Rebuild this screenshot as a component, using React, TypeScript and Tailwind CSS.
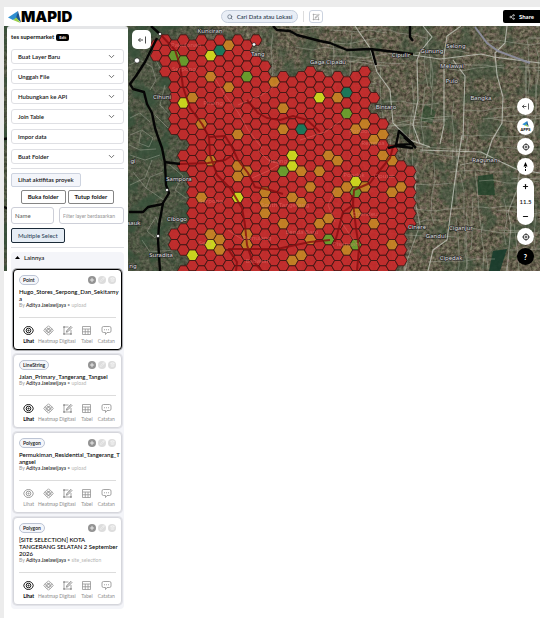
import { ReactNode } from 'react';
import { ChevronDown, Minus, Pencil, Plus, Search, Share2, Trash2 } from 'lucide-react';

interface Layer {
  type: string;
  title: string;
  source: string;
  visible: boolean;
  selected?: boolean;
}

const layers: Layer[] = [
  { type: 'Point', title: 'Hugo_Stores_Serpong_Dan_Sekitarnya', source: 'upload', visible: true, selected: true },
  { type: 'LineString', title: 'Jalan_Primary_Tangerang_Tangsel', source: 'upload', visible: true },
  { type: 'Polygon', title: 'Permukiman_Residential_Tangerang_Tangsel', source: 'upload', visible: false },
  { type: 'Polygon', title: '[SITE SELECTION] KOTA TANGERANG SELATAN 2 September 2026', source: 'site_selection', visible: true },
];

const menuItems = [
  { label: 'Buat Layer Baru', expandable: true },
  { label: 'Unggah File', expandable: true },
  { label: 'Hubungkan ke API', expandable: true },
  { label: 'Join Table', expandable: true },
  { label: 'Impor data', expandable: false },
  { label: 'Buat Folder', expandable: true },
];

// [column, first half-row, last half-row]
const hexRuns: number[][] = [
  [0, 1, 3], [1, 0, 6], [2, 1, 17], [2, 37, 39], [3, 0, 18], [3, 22, 24], [3, 36, 40], [3, 44, 44],
  [4, 1, 45], [5, 0, 44], [6, 1, 45], [7, 0, 44], [8, 1, 45], [9, 0, 44], [10, 1, 45],
  [11, 0, 0], [11, 4, 44], [12, 5, 45], [13, 8, 44], [14, 7, 45], [15, 8, 44], [16, 7, 45],
  [17, 6, 44], [18, 7, 45], [19, 8, 44], [20, 7, 45], [21, 8, 44], [22, 7, 45], [23, 6, 44],
  [24, 11, 11], [24, 15, 45], [25, 16, 44], [26, 21, 45], [27, 24, 42], [28, 25, 35],
];

const hexScores: Record<string, string[]> = {
  '#c98122': [
    '8-1', '6-7', '8-9', '13-8', '4-11', '5-16', '14-13', '14-17', '9-18', '6-23', '9-24', '9-26', '10-25',
    '16-25', '18-25', '19-22', '17-28', '5-30', '12-29', '15-30', '16-31', '12-31', '12-33', '14-35', '18-35',
    '19-34', '6-37', '7-38', '7-40', '10-37', '10-39', '17-38', '16-41', '15-42', '20-11', '22-17', '23-16',
    '25-18', '24-19', '20-23', '25-22', '26-23', '21-28', '23-28', '20-29', '27-28', '26-29', '22-33',
    '24-35', '21-40', '26-39',
  ],
  '#d2dc1c': ['6-3', '18-11', '3-12', '15-22', '15-24', '9-30', '6-39', '4-41', '22-27'],
  '#6a9f2b': ['2-3', '3-4', '10-7', '14-25', '19-38', '21-14', '22-29', '22-39'],
  '#18795a': ['7-2', '16-17', '21-10'],
};

const scoreOf: Record<string, string> = {};
Object.entries(hexScores).forEach(([color, keys]) => keys.forEach((key) => (scoreOf[key] = color)));

const hexes = hexRuns.flatMap(([col, from, to]) => {
  const cells = [];
  for (let row = from; row <= to; row += 2) {
    const x = 156.2 + col * 9.07;
    const y = 40 + row * 5.25;
    const points = [[6, 0], [3, 5.25], [-3, 5.25], [-6, 0], [-3, -5.25], [3, -5.25]]
      .map(([dx, dy]) => `${(x + dx).toFixed(1)},${(y + dy).toFixed(1)}`)
      .join(' ');
    cells.push({ key: `${col}-${row}`, points });
  }
  return cells;
});

const noise = (n: number) => {
  const v = Math.sin(n * 127.1 + 11.7) * 43758.5453;
  return v - Math.floor(v);
};

const streets: string[] = [];
for (let i = 0; i < 110; i++) {
  let x = 255 + noise(i) * 285;
  let y = 26 + noise(i + 200) * 240;
  let d = `M${x.toFixed(0)} ${y.toFixed(0)}`;
  for (let s = 0; s < 4; s++) {
    const main = 8 + noise(i * 7 + s) * 13;
    const side = (noise(i * 13 + s) - 0.5) * 6;
    x += i % 2 ? main : side;
    y += i % 2 ? side : main;
    d += `L${x.toFixed(0)} ${y.toFixed(0)}`;
  }
  streets.push(d);
}

const places: [string, number, number][] = [
  ['Kunciran', 210, 33], ['Tang', 258, 56], ['Gaga Cipadu', 328, 64], ['Cihuni', 162, 99],
  ['Sampora', 179, 181], ['Cibogo', 177, 221], ['Suradita', 161, 257], ['gi', 133, 163], ['sauk', 134, 225],
  ['ng', 133, 268], ['Bintaro', 386, 109], ['Cipulir', 401, 57], ['Gunung', 432, 53], ['Selong', 456, 48],
  ['Melawai', 452, 68], ['Pulo', 452, 83], ['Bangka', 481, 100], ['Ragunan', 485, 162], ['Cinere', 417, 229],
  ['Gandul', 436, 238], ['Ciganjur', 461, 230], ['Cipedak', 451, 260],
];

const districts: [string, number, number][] = [
  ['Pakulonan', 186, 47], ['Serpong', 184, 71], ['Pinang', 213, 105], ['Serpong', 211, 203],
  ['South Tangerang', 285, 207], ['Jurang', 278, 163], ['Benda Baru', 302, 234], ['Setu', 205, 245],
  ['Pamulang', 257, 240], ['Babakan', 258, 263], ['Pondok', 360, 133], ['Rempoa', 373, 145],
  ['Pondok', 354, 177], ['Ciputat', 384, 178], ['Cirendeu', 365, 216], ['Pisangan', 346, 246],
];

const MapView = () => (
  <svg
    className="block h-[245px] w-full bg-[#4b493e]"
    viewBox="4 26 536 245"
    preserveAspectRatio="xMinYMin slice"
    role="img"
    aria-label="Peta"
  >
    <defs>
      <filter id="terrain" x="0" y="0" width="100%" height="100%" colorInterpolationFilters="sRGB">
        <feTurbulence type="fractalNoise" baseFrequency="0.3" numOctaves="3" seed="5" />
        <feColorMatrix values="0.5 0.1 0 0 0.09  0.4 0.2 0 0 0.07  0.42 0.1 0 0 0.04  0 0 0 0 1" />
      </filter>
      <filter id="woods" x="0" y="0" width="100%" height="100%" colorInterpolationFilters="sRGB">
        <feTurbulence type="fractalNoise" baseFrequency="0.05" numOctaves="4" seed="9" />
        <feColorMatrix values="0 0 0 0 0.22  0 0 0 0 0.32  0 0 0 0 0.23  5 0 0 0 -2.4" />
      </filter>
    </defs>
    <rect x="4" y="26" width="1200" height="245" filter="url(#terrain)" />
    <rect x="4" y="26" width="1200" height="245" filter="url(#woods)" opacity="0.5" />
    <rect x="4" y="26" width="200" height="245" fill="#2c4733" opacity="0.35" />
    <rect x="4" y="26" width="200" height="245" filter="url(#woods)" opacity="0.6" />
    <path d="M478 176L493 174L495 195L478 195Z" fill="#1f4128" opacity="0.8" />
    <path d="M493 251L507 249L500 271L489 271Z" fill="#173b2b" opacity="0.9" />
    <path d="M425 104L436 112L432 124L420 120Z" fill="#27492b" opacity="0.6" />

    <g fill="none" stroke="#a9ad9f" strokeWidth="0.7" opacity="0.65">
      {streets.map((d, i) => (
        <path key={i} d={d} />
      ))}
      <path d="M129 65L140 60L152 67L156 80L150 90M153 55L160 68L174 72M130 135L142 130L153 138L149 147L139 143L141 131M130 155L145 160L160 155M130 185L145 178L152 160M133 172L146 188L165 201M146 188L150 177L163 172M170 165L183 176L175 190L186 198M147 231L156 217L160 228L155 238L147 231M129 145L140 150L156 149M155 115L168 128L180 130M130 118L140 113L150 122M142 240L150 252L175 250M165 85L160 105L174 120" />
    </g>
    <g fill="none" stroke="#c9ccc2" strokeWidth="1.1" opacity="0.75">
      <path d="M355 26L370 48L377 72L390 90L393 123L410 140L430 147" />
      <path d="M423 26L432 37L420 52L417 60L418 100L413 125L420 144" />
      <path d="M413 55L440 59L481 54L494 57L540 63" />
      <path d="M461 26L447 36L444 55L444 125L440 144M453 60L465 76L464 104L463 140" />
      <path d="M507 26L505 43L495 53L497 75L503 97L502 123L492 140L484 165" />
      <path d="M420 150L481 152L497 160L516 169L540 173" />
      <path d="M462 135L455 180L447 240L433 250L428 271" />
      <path d="M520 168L517 190L508 212L511 225L507 271" opacity="0.6" />
      <path d="M416 165L415 200L420 225L408 258L405 271" opacity="0.6" />
      <path d="M526 60L526 110M460 165L475 162" opacity="0.6" />
    </g>
    <path d="M475 27L487 43L498 51L530 63" fill="none" stroke="#8b8c99" strokeWidth="2" />

    {hexes.map(({ key, points }) => (
      <polygon
        key={key}
        points={points}
        fill={scoreOf[key] ?? '#c72a2b'}
        fillOpacity="0.93"
        stroke="#3a1513"
        strokeWidth="0.8"
      />
    ))}

    <g fill="none" stroke="#e56a66" strokeWidth="1" opacity="0.45">
      <path d="M213 75L225 95L238 112L248 130L262 148M258 150L268 160L280 164M252 178L268 171L280 164M238 105L262 95L280 82" />
      <path d="M300 140L325 132L345 118M340 220L350 235L358 245M228 230L243 240M335 190L328 205L335 222" />
    </g>
    <g fill="none" stroke="#860d10" strokeWidth="2" opacity="0.8" strokeLinejoin="round">
      <path d="M160 34L175 50L180 65L183 87L190 108L202 124L209 137L210 155L217 175L230 188L242 208L245 225L247 245L252 260L262 271" />
      <path d="M209 137L225 136L232 147L238 160L248 173L255 187L270 190L283 194" />
      <path d="M247 100L258 113L267 118L280 120L293 116L307 120L320 132" />
      <path d="M180 164L208 163L225 160L233 155" />
      <path d="M228 249L277 249L310 242L330 240M228 249L237 262L236 271" />
      <path d="M334 245L337 235L343 212L353 205L354 190L370 183L380 170L390 158L393 147" />
      <path d="M352 195L356 228L359 248L357 271" />
    </g>

    <g fill="none" stroke="#050505" strokeWidth="2.4" strokeLinejoin="round">
      <path d="M151 26L161 35M157 38L152 48L145 62L136 76L130 84L133 89L144 92L147 104L152 113L155 128L158 137L162 148L165 163L166 185L169 193L163 203L159 225L158 240L160 271" />
      <path d="M164 162L180 164M129 212L143 212L148 207L163 204" />
      <path d="M4 139L11 138M4 207L11 210" />
      <path d="M273 26L277 30L290 31L297 35L320 41L330 43L347 50L370 49L413 54M372 50L376 65M410 26L410 37L413 41" />
      <path d="M399 131L413 144L396 145ZM404 137L416 148M388 148L396 146L413 148" />
    </g>

    <g fill="#fff" stroke="#111" strokeWidth="0.6">
      <circle cx="137" cy="60.5" r="2.6" />
      <circle cx="160" cy="34" r="1.6" />
      <circle cx="254" cy="44.5" r="1.8" />
      <circle cx="167" cy="190" r="1.6" />
      <circle cx="158" cy="236" r="1.6" />
    </g>

    <g fontFamily="Noto Sans, sans-serif" fontSize="6" textAnchor="middle">
      <g fill="#f08480" opacity="0.45">
        {districts.map(([name, x, y], i) => (
          <text key={i} x={x} y={y}>{name}</text>
        ))}
      </g>
      <g fill="#e2e2e2" stroke="#222" strokeWidth="1.2" paintOrder="stroke">
        {places.map(([name, x, y]) => (
          <text key={name} x={x} y={y}>{name}</text>
        ))}
      </g>
    </g>
  </svg>
);

const EyeIcon = () => (
  <svg className="h-[11px] w-[11px]" viewBox="0 0 22 22" fill="none" stroke="currentColor" strokeWidth="1.8">
    <path d="M1.5 11C2.500 6 6 3 11 3S19.500 6 20.500 11C19.500 16 16 19 11 19S2.500 16 1.500 11Z" />
    <circle cx="11" cy="11" r="4.600" />
    <circle cx="11" cy="11" r="1.200" />
  </svg>
);

const HeatmapIcon = () => (
  <svg className="h-[11px] w-[11px]" viewBox="0 0 22 22" fill="none" stroke="currentColor" strokeWidth="1.5">
    <path d="M11 1.500L14.500 5L18 7.500L20.500 11L17.500 14.500L14 17.500L11 20.500L8 17.500L4.500 14.500L1.500 11L4 7.500L7.500 5Z" />
    <path d="M11 6L16 11L11 16L6 11ZM7.500 5L17.500 14.500M4 7.500L14 17.500M14.500 5L4.500 14.500M18 7.500L8 17.500" />
  </svg>
);

const DigitizeIcon = ({ className = 'h-[11px] w-[11px]' }: { className?: string }) => (
  <svg className={className} viewBox="0 0 22 22" fill="none" stroke="currentColor" strokeWidth="1.6">
    <path d="M13 4H4V18H18V10M9 14L18 4.500" />
    <path d="M8.500 14.500L9.500 11L17.500 2.500L20 5L12 13.500Z" />
    <path d="M3 3H5V5H3ZM3 17H5V19H3ZM17 17H19V19H17Z" />
  </svg>
);

const TableIcon = () => (
  <svg className="h-[11px] w-[11px]" viewBox="0 0 22 22" fill="none" stroke="currentColor" strokeWidth="1.5">
    <path d="M3 3H19V19H3ZM3 8H19M3 13.500H19M8.500 8V19M14 8V19" />
  </svg>
);

const NoteIcon = () => (
  <svg className="h-[11px] w-[11px]" viewBox="0 0 22 22" fill="none" stroke="currentColor" strokeWidth="1.6">
    <path d="M5 3H17Q20 3 20 6V12Q20 15 17 15H12L9 19V15H5Q2 15 2 12V6Q2 3 5 3Z" />
    <path d="M6 9.500H8M10 9.500H12M14 9.500H16" />
  </svg>
);

const CollapseIcon = ({ className }: { className: string }) => (
  <svg className={className} viewBox="0 0 16 16" fill="none" stroke="currentColor" strokeWidth="1.5">
    <path d="M10 8H1M5 4L1 8L5 12M15 1V15" />
  </svg>
);

const TargetIcon = () => (
  <svg className="h-2 w-2" viewBox="0 0 16 16" fill="none" stroke="currentColor" strokeWidth="1.4">
    <circle cx="8" cy="8" r="5.500" />
    <circle cx="8" cy="8" r="2" />
    <path d="M8 0.500V3M8 13V15.500M0.500 8H3M13 8H15.500" />
  </svg>
);

const LogoMark = ({ className }: { className: string }) => (
  <svg className={className} viewBox="0 0 26 24">
    <path d="M0 13L20 0L18 14L10 18Z" fill="#2f8fd0" />
    <path d="M20 0L16 14L26 23Z" fill="#1c5590" />
    <path d="M10 18L17 13L25 24Z" fill="#9ad04a" />
  </svg>
);

const actions = [
  { label: 'Lihat', icon: <EyeIcon /> },
  { label: 'Heatmap', icon: <HeatmapIcon /> },
  { label: 'Digitasi', icon: <DigitizeIcon /> },
  { label: 'Tabel', icon: <TableIcon /> },
  { label: 'Catatan', icon: <NoteIcon /> },
];

const LayerCard = ({ layer }: { layer: Layer }) => (
  <article className={`rounded-[4px] border bg-white px-[5px] pt-[5px] pb-[5px] ${layer.selected ? 'border-black ring-1 ring-black/30' : 'border-[#d5d6dc] ring-1 ring-[#e3e4e9]'}`}>
    <div className="mb-1 flex h-[9px] items-center justify-between">
      <span className="flex h-[10px] items-center rounded-full border border-[#bcc4d4] bg-[#f4f6fa] px-[3px] text-[5px] font-semibold">
        {layer.type}
      </span>
      <div className="flex gap-[2px] text-white">
        <button aria-label="Tambah" className="flex h-2 w-2 items-center justify-center rounded-full bg-[#929292]">
          <Plus size={6} strokeWidth={3} />
        </button>
        <button aria-label="Ubah" className="flex h-2 w-2 items-center justify-center rounded-full bg-[#dddddd]">
          <Pencil size={5} />
        </button>
        <button aria-label="Hapus" className="flex h-2 w-2 items-center justify-center rounded-full bg-[#dddddd]">
          <Trash2 size={5} />
        </button>
      </div>
    </div>
    <h3 className="-mr-1 text-[6px] leading-[7px] font-medium text-black wrap-anywhere">{layer.title}</h3>
    <p className="text-[5px] leading-[7px] whitespace-nowrap text-[#999]">
      By <span className="font-medium text-[#222]">Aditya Jaelawijaya</span> • <span className="text-[#b5b5b5]">{layer.source}</span>
    </p>
    <div className="mt-2 grid grid-cols-5 border-t border-[#dcdcdc] pt-[7px]">
      {actions.map(({ label, icon }, i) => (
        <button
          key={label}
          className={`flex flex-col items-center gap-[2px] ${i === 0 && layer.visible ? 'font-bold text-black' : 'text-[#8e8e8e]'}`}
        >
          {icon}
          <span className="text-[5px] leading-[6px]">{label}</span>
        </button>
      ))}
    </div>
  </article>
);

const RoundButton = ({ label, dark, children }: { label: string; dark?: boolean; children: ReactNode }) => (
  <button
    aria-label={label}
    className={`flex h-[17px] w-[17px] flex-col items-center justify-center rounded-full ${dark ? 'bg-black text-white' : 'bg-white text-black'}`}
  >
    {children}
  </button>
);

const App = () => {
  return (
    <div className="min-h-screen bg-[#ececec] pt-[7px] pl-1 font-['Lato',sans-serif] text-[6px] leading-[8px] text-[#111]">
      <div className="min-h-[611px] bg-white">
        <header className="grid h-[19px] grid-cols-[1fr_auto_1fr] items-center">
          <div className="flex items-center pl-1">
            <LogoMark className="h-3 w-[13px]" />
            <span className="font-['Inter',sans-serif] text-[15px] leading-[19px] font-black text-black">MAPID</span>
          </div>
          <div className="flex items-center gap-[5px]">
            <button className="flex h-[13px] items-center gap-1 rounded-full border border-[#c5cedc] bg-[#e9eef6] px-[5px] font-medium text-[#26364a]">
              <Search size={6} />
              Cari Data atau Lokasi
            </button>
            <span className="h-[11px] w-px bg-[#dddddd]" />
            <button aria-label="Edit peta" className="flex h-[13px] w-[14px] items-center justify-center rounded-[3px] border border-[#ccd3df] text-[#999]">
              <DigitizeIcon className="h-2 w-2" />
            </button>
          </div>
          <button className="flex h-[13px] w-[37px] items-center justify-center gap-1 justify-self-end rounded-l-[2px] bg-black text-[6px] font-bold text-white">
            <Share2 size={6} />
            Share
          </button>
        </header>

        <main className="relative grid">
          <div className="col-start-1 row-start-1">
            <MapView />
          </div>

          <aside className="z-10 col-start-1 row-start-1 ml-[3px] w-[121px] rounded-t-[3px] border-t-[3px] border-[#e5e6e8] bg-white px-1 pt-1">
            <div className="flex h-[8px] items-center gap-[2px] font-bold">
              tes supermarket
              <button className="h-[7px] rounded-[2px] bg-black px-[3px] text-[4px] leading-[7px] font-bold text-white">Edit</button>
            </div>

            <div className="mt-2 flex flex-col gap-[5px]">
              {menuItems.map(({ label, expandable }) => (
                <button
                  key={label}
                  className="flex h-[15px] items-center justify-between rounded-[3px] border border-[#dfe0e4] pr-[7px] pl-[6px] font-semibold"
                >
                  {label}
                  {expandable && <ChevronDown size={9} strokeWidth={2} className="text-[#444]" />}
                </button>
              ))}
            </div>

            <div className="mt-1 border-t border-[#dedfe3] pt-1">
              <button className="h-[14px] rounded-[2px] border border-[#cdd3df] bg-[#f3f5fa] px-[6px] font-semibold">
                Lihat aktifitas proyek
              </button>
            </div>
            <div className="mt-[3px] flex justify-center gap-[2px]">
              <button className="h-[14px] rounded-[2px] border border-[#858585] px-[6px] font-bold">Buka folder</button>
              <button className="h-[14px] rounded-[2px] border border-[#858585] px-[6px] font-bold">Tutup folder</button>
            </div>
            <div className="mt-[3px] flex gap-[5px]">
              <input
                aria-label="Urutkan berdasarkan"
                defaultValue="Name"
                className="h-[17px] w-[43px] rounded-[3px] border border-[#cdcfd8] px-[3px] text-[#555]"
              />
              <input
                aria-label="Filter layer"
                placeholder="Filter layer berdasarkan"
                className="h-[17px] min-w-0 flex-1 rounded-[3px] border border-[#cdcfd8] px-[3px] font-['Roboto',sans-serif] text-[5px] placeholder:text-[#999]"
              />
            </div>
            <button className="mt-1 h-[15px] rounded-[2px] border border-[#1b2a38] bg-[#e6edf5] px-[6px] font-medium text-[#33475b]">
              Multiple Select
            </button>

            <section className="mt-1 border-t border-[#dedfe3] pt-1">
              <div className="rounded-[4px] bg-[#f4f5f9] px-[2px] pb-1">
                <button className="flex h-[17px] w-full items-start gap-1 pt-[2px] pl-[2px] font-medium">
                  <svg className="mt-[2px] h-[3px] w-[5px]" viewBox="0 0 10 6">
                    <path d="M0 6L5 0L10 6Z" />
                  </svg>
                  Lainnya
                </button>
                <div className="flex flex-col gap-1">
                  {layers.map((layer) => (
                    <LayerCard key={layer.title} layer={layer} />
                  ))}
                </div>
              </div>
            </section>
          </aside>

          <button
            aria-label="Tutup panel"
            className="absolute top-1 left-[128px] flex h-[19px] w-[19px] items-center justify-center rounded-[5px] bg-white"
          >
            <CollapseIcon className="h-2 w-2" />
          </button>

          <div className="absolute top-[72px] right-[6px] flex flex-col gap-[3px]">
            <RoundButton label="Tutup alat">
              <CollapseIcon className="h-[7px] w-[7px]" />
            </RoundButton>
            <RoundButton label="Aplikasi">
              <LogoMark className="h-[6px] w-[7px]" />
              <span className="text-[4px] leading-[5px] font-bold">APPS</span>
            </RoundButton>
            <RoundButton label="Lokasi saya">
              <TargetIcon />
            </RoundButton>
            <RoundButton label="Arah utara">
              <svg className="h-[9px] w-[5px]" viewBox="0 0 10 18">
                <path d="M5 0L9 9H1Z" />
                <path d="M4 10H6V12H4ZM4 14H6V18H4Z" />
              </svg>
            </RoundButton>
            <div className="flex h-[47px] w-[17px] flex-col items-center justify-between rounded-full bg-white py-[5px]">
              <button aria-label="Perbesar">
                <Plus size={7} strokeWidth={4} />
              </button>
              <span className="font-semibold">11.5</span>
              <button aria-label="Perkecil">
                <Minus size={7} strokeWidth={4} />
              </button>
            </div>
            <RoundButton label="Kompas">
              <TargetIcon />
            </RoundButton>
            <RoundButton label="Bantuan" dark>
              <span className="text-[7px] font-black">?</span>
            </RoundButton>
          </div>
        </main>
      </div>
    </div>
  );
};

export default App;
